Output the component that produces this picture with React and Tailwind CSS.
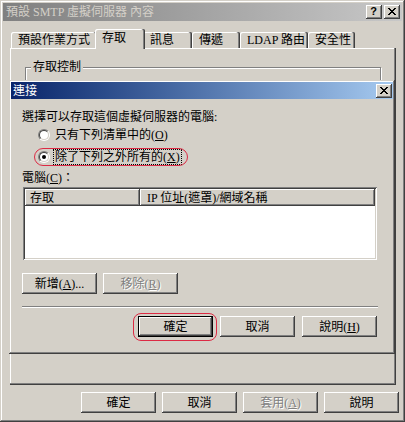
import React from "react";

const raised =
  "shadow-[inset_-1px_-1px_0_#404040,inset_1px_1px_0_#ffffff,inset_-2px_-2px_0_#808080]";

const tabs = [
  { label: "預設作業方式", w: "w-[86px]" },
  { label: "存取", w: "w-[50px]", active: true },
  { label: "訊息", w: "w-[49px]" },
  { label: "傳遞", w: "w-[48px]" },
  { label: "LDAP 路由", w: "w-[68px]" },
  { label: "安全性", w: "w-[47px]" },
];

// classic 8x7 caption cross
const crossPixels = [
  [0, 0], [1, 0], [6, 0], [7, 0],
  [1, 1], [2, 1], [5, 1], [6, 1],
  [2, 2], [3, 2], [4, 2], [5, 2],
  [3, 3], [4, 3],
  [2, 4], [3, 4], [4, 4], [5, 4],
  [1, 5], [2, 5], [5, 5], [6, 5],
  [0, 6], [1, 6], [6, 6], [7, 6],
];

function CrossGlyph() {
  return (
    <svg width="8" height="7" viewBox="0 0 8 7" shapeRendering="crispEdges">
      {crossPixels.map(([x, y]) => (
        <rect key={`${x}-${y}`} x={x} y={y} width="1" height="1" fill="#000" />
      ))}
    </svg>
  );
}

function CaptionButton({ children }) {
  return (
    <div
      className={`flex h-[14px] w-[16px] items-center justify-center bg-[#d4d0c8] pr-[1px] pb-[1px] ${raised}`}
    >
      {children}
    </div>
  );
}

function Button({ children, disabled, isDefault }) {
  return (
    <button
      type="button"
      className={`flex h-[21px] w-[75px] items-center justify-center bg-[#d4d0c8] text-[12px] leading-[14px] ${raised} ${
        isDefault ? "border border-black" : ""
      } ${disabled ? "text-[#808080] [text-shadow:1px_1px_0_#ffffff]" : "text-black"}`}
    >
      {children}
    </button>
  );
}

function Radio({ checked }) {
  return (
    <span className="flex h-[12px] w-[12px] shrink-0 rounded-full border border-t-[#808080] border-l-[#808080] border-r-white border-b-white">
      <span className="flex flex-1 items-center justify-center rounded-full border border-t-[#404040] border-l-[#404040] border-r-[#d4d0c8] border-b-[#d4d0c8] bg-white">
        {checked && <span className="h-[4px] w-[4px] rounded-full bg-black" />}
      </span>
    </span>
  );
}

export default function App() {
  return (
    <div className="relative flex h-[422px] w-[405px] flex-col overflow-hidden bg-[#d4d0c8] p-[3px] font-['Liberation_Serif','Noto_Sans_CJK_TC',serif] text-[12px] leading-[14px] text-black shadow-[inset_-1px_-1px_0_#404040,inset_1px_1px_0_#d4d0c8,inset_-2px_-2px_0_#808080,inset_2px_2px_0_#ffffff]">
      {/* title bar (inactive) */}
      <div className="flex h-[18px] shrink-0 items-center bg-gradient-to-r from-[#808080] to-[#c8c8c8] pl-[3px] pr-[2px]">
        <span className="flex-1 text-[#d4d0c8]">預設 SMTP 虛擬伺服器 內容</span>
        <div className="flex gap-[2px]">
          <CaptionButton>
            <span className="font-['Liberation_Sans',sans-serif] text-[11px] font-bold leading-[11px]">?</span>
          </CaptionButton>
          <CaptionButton>
            <CrossGlyph />
          </CaptionButton>
        </div>
      </div>

      {/* tabs + page */}
      <div className="ml-[7px] mr-[6px] flex flex-1 flex-col">
        <div className="flex h-[27px] shrink-0 items-end pl-[1px]">
          {tabs.map((t) =>
            t.active ? (
              <div
                key={t.label}
                className={`relative z-10 -mx-[2px] -mb-[1px] h-[20px] ${t.w} rounded-t-[2px] bg-[#d4d0c8] pl-[7px] pt-[1px] leading-[16px] shadow-[inset_-1px_0_0_#404040,inset_-2px_0_0_#808080,inset_1px_1px_0_#ffffff]`}
              >
                {t.label}
              </div>
            ) : (
              <div
                key={t.label}
                className={`h-[16px] ${t.w} rounded-t-[2px] pl-[7px] leading-[16px] shadow-[inset_-1px_0_0_#404040,inset_-2px_0_0_#808080,inset_1px_1px_0_#ffffff]`}
              >
                {t.label}
              </div>
            )
          )}
        </div>
        <div className="flex-1 pl-[15px] pr-[15px] pt-[12px] shadow-[inset_-1px_-1px_0_#404040,inset_-2px_-2px_0_#808080,inset_1px_1px_0_#ffffff]">
          <fieldset className="h-[280px] border border-[#808080] shadow-[inset_1px_1px_0_#ffffff,1px_1px_0_#ffffff]">
            <legend className="ml-[5px] bg-[#d4d0c8] px-[2px] leading-[14px]">存取控制</legend>
          </fieldset>
        </div>
      </div>

      {/* bottom buttons */}
      <div className="mb-[6px] mr-[3px] mt-[7px] flex shrink-0 justify-end gap-[6px]">
        <Button>確定</Button>
        <Button>取消</Button>
        <Button disabled>
          套用(<u>A</u>)
        </Button>
        <Button>說明</Button>
      </div>

      {/* connect dialog */}
      <div className="absolute left-[9px] top-[80px] z-20 flex h-[274px] w-[386px] flex-col bg-[#d4d0c8] p-[2px] shadow-[inset_-1px_-1px_0_#404040,inset_1px_1px_0_#d4d0c8,inset_-2px_-2px_0_#808080,inset_2px_2px_0_#ffffff]">
        <div className="flex h-[17px] shrink-0 items-center bg-gradient-to-r from-[#0a246a] to-[#a6caf0] pl-[2px] pr-[1px]">
          <span className="flex-1 text-white">連接</span>
          <CaptionButton>
            <CrossGlyph />
          </CaptionButton>
        </div>

        <div className="flex flex-col pl-[11px] pr-[16px]">
          <div className="mt-[11px] h-[14px]">選擇可以存取這個虛擬伺服器的電腦:</div>

          <div className="mt-[4px] flex h-[14px] items-center gap-[5px] pl-[16px]">
            <Radio />
            <span>
              只有下列清單中的(<u>O</u>)
            </span>
          </div>

          <div className="relative mt-[7px] flex h-[16px] items-center gap-[3px] pl-[16px]">
            <Radio checked />
            <span className="border border-dotted border-black px-[1px] leading-[14px]">
              除了下列之外所有的(<u>X</u>)
            </span>
            <span className="absolute left-[12px] top-[-1px] h-[18px] w-[154px] rounded-[9px] border-[1.5px] border-[#dc2a44]" />
          </div>

          <div className="mt-[6px] h-[14px]">
            電腦(<u>C</u>)：
          </div>

          <div className="ml-[1px] mt-[2px] h-[73px] bg-white p-[2px] shadow-[inset_1px_1px_0_#808080,inset_-1px_-1px_0_#ffffff,inset_2px_2px_0_#404040,inset_-2px_-2px_0_#d4d0c8]">
            <div className="flex h-[17px]">
              <div className={`flex w-[115px] items-center bg-[#d4d0c8] pl-[5px] ${raised}`}>存取</div>
              <div className={`flex flex-1 items-center bg-[#d4d0c8] pl-[7px] ${raised}`}>
                IP 位址(遮罩)/網域名稱
              </div>
            </div>
          </div>

          <div className="mt-[13px] flex gap-[6px]">
            <Button>
              新增(<u>A</u>)...
            </Button>
            <Button disabled>
              移除(<u>R</u>)
            </Button>
          </div>

          <div className="-mr-[1px] mt-[12px] h-[2px] border-b border-t border-b-white border-t-[#808080]" />

          <div className="mt-[8px] flex justify-end gap-[7px]">
            <div className="relative">
              <Button isDefault>確定</Button>
              <span className="absolute left-[-5px] top-[-3px] h-[28px] w-[84px] rounded-[8px] border-[1.5px] border-[#dc2a44]" />
            </div>
            <Button>取消</Button>
            <Button>
              說明(<u>H</u>)
            </Button>
          </div>
        </div>
      </div>
    </div>
  );
}
